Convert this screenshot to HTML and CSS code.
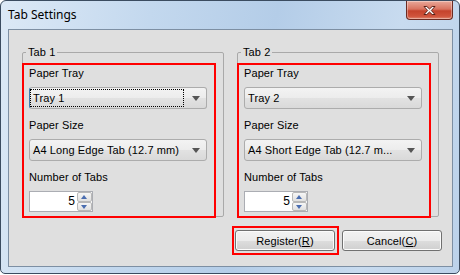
FILE: index.html
```html
<!DOCTYPE html>
<html lang="en">
  <head>
    <meta charset="UTF-8" />
    <title>Tab Settings</title>
    <link rel="stylesheet" href="styles.css">
  </head>
  <body>
    <div class="window">
      <div class="titlebar">
        <span class="title">Tab Settings</span>
        <div class="close-btn">
          <svg width="15" height="11" viewBox="0 0 15 11">
            <path d="M2 1.5 L4.8 1.5 L7.5 4 L10.2 1.5 L13 1.5 L9.3 5.5 L13 9.5 L10.2 9.5 L7.5 7 L4.8 9.5 L2 9.5 L5.7 5.5 Z"
              fill="#fff" stroke="#5a2017" stroke-width="1" stroke-linejoin="round" />
          </svg>
        </div>
      </div>

      <div class="client">
        <div class="groups">
          <fieldset class="group">
            <legend>Tab 1</legend>
            <div class="highlight">
              <div class="field-label">Paper Tray</div>
              <div class="combo focused">
                <span class="combo-text">Tray 1</span>
                <span class="combo-arrow"></span>
              </div>
              <div class="field-label">Paper Size</div>
              <div class="combo">
                <span class="combo-text">A4 Long Edge Tab (12.7 mm)</span>
                <span class="combo-arrow"></span>
              </div>
              <div class="field-label">Number of Tabs</div>
              <div class="spinner">
                <span class="spin-value">5</span>
                <span class="spin-buttons">
                  <span class="spin-up"></span>
                  <span class="spin-down"></span>
                </span>
              </div>
            </div>
          </fieldset>

          <fieldset class="group">
            <legend>Tab 2</legend>
            <div class="highlight">
              <div class="field-label">Paper Tray</div>
              <div class="combo">
                <span class="combo-text">Tray 2</span>
                <span class="combo-arrow"></span>
              </div>
              <div class="field-label">Paper Size</div>
              <div class="combo">
                <span class="combo-text">A4 Short Edge Tab (12.7 m...</span>
                <span class="combo-arrow"></span>
              </div>
              <div class="field-label">Number of Tabs</div>
              <div class="spinner">
                <span class="spin-value">5</span>
                <span class="spin-buttons">
                  <span class="spin-up"></span>
                  <span class="spin-down"></span>
                </span>
              </div>
            </div>
          </fieldset>
        </div>

        <div class="buttons">
          <div class="btn-mark">
            <button class="btn">Register(<u>R</u>)</button>
          </div>
          <button class="btn">Cancel(<u>C</u>)</button>
        </div>
      </div>
    </div>
  </body>
</html>
```

FILE: styles.css
```css
body {
  margin: 0;
  background-color: #ffffff;
  font-family: "Liberation Sans", Arial, sans-serif;
  font-size: 11px;
  letter-spacing: 0.1px;
  color: #000;
}
.window {
  width: 460px;
  height: 274px;
  box-sizing: border-box;
  border: 1px solid #3b4c60;
  border-radius: 6px 6px 5px 5px;
  background: linear-gradient(100deg, #dce9f6 0%, #c3d8ee 30%, #b4cde8 55%, #c8dbef 80%, #bcd2ea 100%);
  overflow: hidden;
}
.titlebar {
  height: 28px;
  display: flex;
  justify-content: space-between;
  align-items: flex-start;
  padding-left: 7px;
}
.title {
  font-family: "Noto Sans", sans-serif;
  font-size: 12px;
  letter-spacing: 0;
  line-height: 28px;
}
.close-btn {
  width: 45px;
  height: 18px;
  margin-right: 6px;
  border: 1px solid #6b2b22;
  border-top: none;
  border-radius: 0 0 4px 4px;
  background: linear-gradient(#e9a99a 0%, #d9735f 45%, #c5432c 55%, #d0543c 85%, #e08870 100%);
  box-shadow: inset 0 0 0 1px rgba(255, 255, 255, 0.35);
  display: flex;
  align-items: center;
  justify-content: center;
}
.client {
  margin: 0 6px 0 7px;
  height: 238px;
  box-sizing: border-box;
  border: 1px solid #7d8fa3;
  background-color: #dfdfdf;
}
.groups {
  display: flex;
  gap: 13px;
  padding: 14px 0 0 13px;
}
.group {
  width: 202px;
  box-sizing: border-box;
  margin: 0;
  padding: 0;
  border: 1px solid #a9a9a9;
  border-radius: 2px;
}
.group legend {
  margin-left: 3px;
  padding: 0 2px;
  line-height: 16px;
}
.highlight {
  margin: 3px 7px -2px -1px;
  border: 2px solid #ff0000;
  padding: 0 0 4px 5px;
}
.field-label {
  line-height: 16px;
  margin-bottom: 6px;
}
.combo {
  width: 178px;
  height: 22px;
  box-sizing: border-box;
  margin-bottom: 8px;
  display: flex;
  align-items: center;
  border: 1px solid #acacac;
  border-radius: 3px;
  background: linear-gradient(#f3f3f3 0%, #ececec 50%, #e2e2e2 51%, #d9d9d9 100%);
}
.combo.focused {
  border-left-color: #3c7fb1;
}
.combo-text {
  flex: 1;
  height: 18px;
  line-height: 18px;
  padding-left: 3px;
  white-space: nowrap;
  overflow: hidden;
}
.combo.focused .combo-text {
  outline: 1px dotted #000;
  outline-offset: -1px;
}
.combo-arrow {
  width: 22px;
  height: 20px;
  position: relative;
}
.combo-arrow::after {
  content: "";
  position: absolute;
  left: 8px;
  top: 8px;
  border-left: 4px solid transparent;
  border-right: 4px solid transparent;
  border-top: 5px solid #555;
}
.spinner {
  width: 64px;
  height: 21px;
  box-sizing: border-box;
  display: flex;
  border: 1px solid #abadb3;
  background-color: #fff;
}
.spin-value {
  flex: 1;
  text-align: right;
  padding-right: 2px;
  line-height: 19px;
  font-size: 12px;
}
.spin-buttons {
  width: 15px;
  display: flex;
  flex-direction: column;
}
.spin-up,
.spin-down {
  flex: 1;
  position: relative;
  box-sizing: border-box;
  border: 1px solid #b8b8b8;
  border-radius: 2px;
  background: linear-gradient(#f6f6f6, #e0e0e0);
}
.spin-up::after,
.spin-down::after {
  content: "";
  position: absolute;
  left: 3px;
  top: 2px;
  border-left: 3.5px solid transparent;
  border-right: 3.5px solid transparent;
}
.spin-up::after {
  border-bottom: 4px solid #4a6db0;
}
.spin-down::after {
  border-top: 4px solid #4a6db0;
}
.buttons {
  display: flex;
  justify-content: flex-end;
  align-items: center;
  gap: 3px;
  padding-right: 10px;
  margin-top: 9px;
}
.btn-mark {
  border: 2px solid #ff0000;
  padding: 2px 2px 2px 1px;
  display: flex;
}
.btn {
  height: 21px;
  width: 100px;
  box-sizing: border-box;
  border: 1px solid #707070;
  border-radius: 3px;
  background: linear-gradient(#f2f2f2 0%, #ebebeb 50%, #dddddd 51%, #cfcfcf 100%);
  box-shadow: inset 0 0 0 1px #fbfbfb;
  font-family: inherit;
  font-size: 11px;
  letter-spacing: 0.1px;
  color: #000;
  padding: 0;
}
.btn u {
  text-underline-offset: 1px;
}
```
